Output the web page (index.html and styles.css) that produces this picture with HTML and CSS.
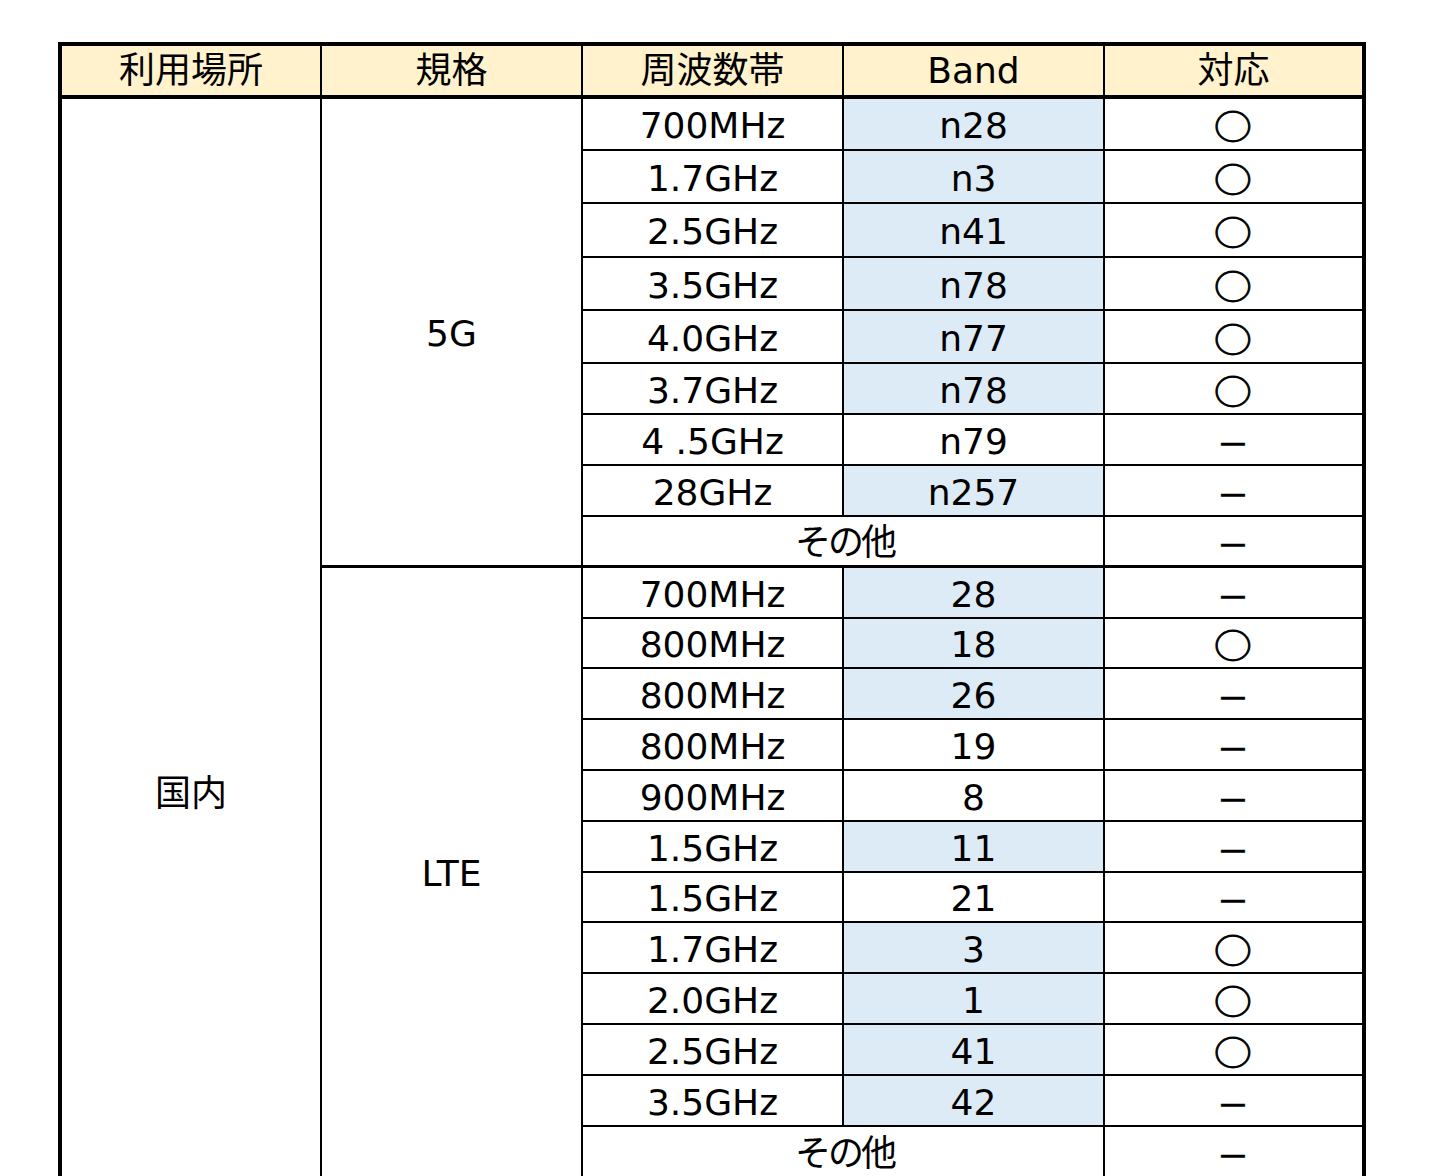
FILE: index.html
```html
<!DOCTYPE html>
<html lang="ja">
<head>
<meta charset="utf-8">
<title>対応周波数</title>
<link rel="stylesheet" href="styles.css">
</head>
<body>
<table class="bands">
  <colgroup>
    <col class="c1"><col class="c2"><col class="c3"><col class="c4"><col class="c5">
  </colgroup>
  <thead>
    <tr class="head">
      <th>利用場所</th><th>規格</th><th>周波数帯</th><th>Band</th><th class="last">対応</th>
    </tr>
  </thead>
  <tbody>
    <tr class="h52">
      <td rowspan="21" class="place">国内</td>
      <td rowspan="9" class="std grp-end">5G</td>
      <td>700MHz</td><td class="blue">n28</td><td class="last"><span class="maru">○</span></td>
    </tr>
    <tr class="h53"><td>1.7GHz</td><td class="blue">n3</td><td class="last"><span class="maru">○</span></td></tr>
    <tr class="h54"><td>2.5GHz</td><td class="blue">n41</td><td class="last"><span class="maru">○</span></td></tr>
    <tr class="h53"><td>3.5GHz</td><td class="blue">n78</td><td class="last"><span class="maru">○</span></td></tr>
    <tr class="h53"><td>4.0GHz</td><td class="blue">n77</td><td class="last"><span class="maru">○</span></td></tr>
    <tr class="h51"><td>3.7GHz</td><td class="blue">n78</td><td class="last"><span class="maru">○</span></td></tr>
    <tr class="h51"><td>4 .5GHz</td><td>n79</td><td class="last"><span class="dash">－</span></td></tr>
    <tr class="h51"><td>28GHz</td><td class="blue">n257</td><td class="last"><span class="dash">－</span></td></tr>
    <tr class="h51"><td colspan="2" class="grp-end"><span class="kana">その他</span></td><td class="last grp-end"><span class="dash">－</span></td></tr>

    <tr class="h51">
      <td rowspan="12" class="std">LTE</td>
      <td>700MHz</td><td class="blue">28</td><td class="last"><span class="dash">－</span></td>
    </tr>
    <tr class="h50"><td>800MHz</td><td class="blue">18</td><td class="last"><span class="maru">○</span></td></tr>
    <tr class="h51"><td>800MHz</td><td class="blue">26</td><td class="last"><span class="dash">－</span></td></tr>
    <tr class="h51"><td>800MHz</td><td>19</td><td class="last"><span class="dash">－</span></td></tr>
    <tr class="h51"><td>900MHz</td><td>8</td><td class="last"><span class="dash">－</span></td></tr>
    <tr class="h51"><td>1.5GHz</td><td class="blue">11</td><td class="last"><span class="dash">－</span></td></tr>
    <tr class="h50"><td>1.5GHz</td><td>21</td><td class="last"><span class="dash">－</span></td></tr>
    <tr class="h51"><td>1.7GHz</td><td class="blue">3</td><td class="last"><span class="maru">○</span></td></tr>
    <tr class="h51"><td>2.0GHz</td><td class="blue">1</td><td class="last"><span class="maru">○</span></td></tr>
    <tr class="h51"><td>2.5GHz</td><td class="blue">41</td><td class="last"><span class="maru">○</span></td></tr>
    <tr class="h51"><td>3.5GHz</td><td class="blue">42</td><td class="last"><span class="dash">－</span></td></tr>
    <tr class="h51"><td colspan="2"><span class="kana">その他</span></td><td class="last"><span class="dash">－</span></td></tr>
  </tbody>
</table>
</body>
</html>
```
FILE: styles.css
```css
html, body {
  margin: 0;
  padding: 0;
  background: #ffffff;
}

body {
  font-family: "DejaVu Sans", "Noto Sans CJK JP", sans-serif;
  color: #000000;
}

.bands {
  margin: 42px 0 0 58px;
  border-collapse: separate;
  border-spacing: 0;
  table-layout: fixed;
  width: 1308px;
  border: 4px solid #000;
  border-bottom: 0;
  font-size: 36px;
  line-height: 36px;
}

.c1 { width: 260px; }
.c2 { width: 261px; }
.c3 { width: 261px; }
.c4 { width: 261px; }
.c5 { width: 257px; }

.bands th,
.bands td {
  padding: 0;
  text-align: center;
  vertical-align: middle;
  font-weight: normal;
  border-right: 2px solid #000;
  border-bottom: 2px solid #000;
  white-space: nowrap;
}

.bands td {
  padding-top: 4px;
}

.bands th {
  background: #fff2cc;
  border-bottom-width: 4px;
  padding-top: 1px;
}

.bands .last {
  border-right: 0;
}

.head { height: 53px; }
.h50 { height: 50px; }
.h51 { height: 51px; }
.h52 { height: 52px; }
.h53 { height: 53px; }
.h54 { height: 54px; }

.bands .grp-end {
  border-bottom-width: 3px;
}

.bands .blue {
  background: #ddebf7;
}

.bands .place {
  padding-top: 312px;
}

.kana {
  display: inline-block;
  letter-spacing: -3px;
  margin-right: -3px;
}

.maru {
  display: inline-block;
  line-height: 36px;
  font-family: "Noto Sans CJK JP", sans-serif;
  transform: scale(1.05, 0.92);
  -webkit-text-stroke: 0.9px #000;
}

.dash {
  display: inline-block;
  line-height: 36px;
  font-family: "Noto Sans CJK JP", sans-serif;
  transform: translateY(2px) scaleX(0.9);
  -webkit-text-stroke: 0.6px #000;
}
```
